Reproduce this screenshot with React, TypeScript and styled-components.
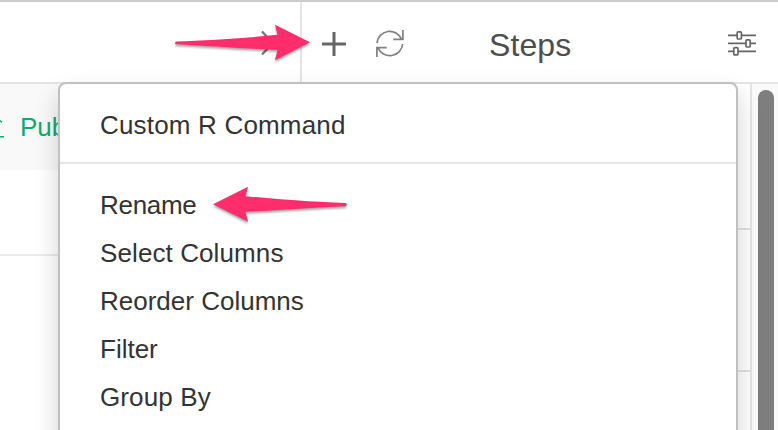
import React from "react";
import styled, { createGlobalStyle } from "styled-components";

const GlobalStyle = createGlobalStyle`
  * { box-sizing: border-box; }
  body {
    margin: 0;
    overflow: hidden;
    background: #fff;
    font-family: "Liberation Sans", Helvetica, Arial, sans-serif;
  }
`;

const Page = styled.div`
  position: relative;
  display: flex;
  flex-direction: column;
  width: 778px;
  height: 430px;
  overflow: hidden;
  background: #fff;
`;

const Header = styled.header`
  display: flex;
  height: 84px;
  flex: none;
  border-top: 2px solid #cccccc;
  border-bottom: 2px solid #e5e5e5;
`;

const TabArea = styled.div`
  display: flex;
  align-items: center;
  justify-content: flex-end;
  width: 302px;
  padding: 2px 15px 0 0;
  border-right: 2px solid #e4e4e4;
`;

const StepsBar = styled.div`
  display: grid;
  grid-template-columns: 64px 48px 1fr 50px;
  flex: 1;
`;

const IconButton = styled.span<{ $left: number; $top: number }>`
  padding: ${(p) => p.$top}px 0 0 ${(p) => p.$left}px;
  line-height: 0;
`;

const Title = styled.h1`
  margin: 0;
  padding: 24px 0 0 75px;
  font-size: 32px;
  font-weight: 400;
  line-height: 38px;
  letter-spacing: 0.1px;
  color: #4d4d4d;
`;

const Body = styled.main`
  display: flex;
  flex: 1;
  min-height: 0;
`;

const Content = styled.section`
  width: 302px;
`;

const PublishBar = styled.div`
  display: flex;
  height: 86px;
  background: #f9f9f9;
`;

const PublishLabel = styled.span`
  padding: 27px 0 0 15px;
  font-size: 26px;
  line-height: 32px;
  color: #12ab6d;
`;

const TrayIcon = styled.svg`
  width: 5px;
  height: 22px;
  margin-top: 34px;
`;

const ContentRow = styled.div`
  height: 86px;
  border-bottom: 2px solid #ebebeb;
`;

const StepList = styled.section`
  flex: 1;
  border-right: 2px solid #e4e4e4;
`;

const Step = styled.div<{ $height: number }>`
  height: ${(p) => p.$height}px;
  border-bottom: 2px solid #e2e2e2;
`;

const Track = styled.div`
  width: 26px;
  padding: 6px 4px 0 6px;
  background: #fafafa;
`;

const Thumb = styled.div`
  height: 100%;
  border-radius: 8px 8px 0 0;
  background: #7e7e7e;
`;

const Menu = styled.nav`
  position: absolute;
  top: 82px;
  left: 58px;
  width: 680px;
  height: 420px;
  border: 2px solid #c0c0c0;
  border-radius: 8px;
  background: #fff;
  background-clip: padding-box;
  box-shadow: 0 12px 24px rgba(0, 0, 0, 0.175);
`;

const MenuSection = styled.div<{ $divided?: boolean }>`
  padding: 17px 0;
  height: ${(p) => (p.$divided ? "80px" : "auto")};
  border-bottom: ${(p) => (p.$divided ? "2px solid #e5e5e5" : "0")};
`;

const MenuItem = styled.div<{ $spacing: number }>`
  height: 48px;
  padding-left: 40px;
  font-size: 26px;
  line-height: 48px;
  letter-spacing: ${(p) => p.$spacing}px;
  color: #333;
  white-space: nowrap;
`;

const Arrow = styled.svg<{ $x: number; $y: number }>`
  position: absolute;
  left: ${(p) => p.$x}px;
  top: ${(p) => p.$y}px;
  width: 150px;
  height: 50px;
  fill: #ff2d6c;
  filter: drop-shadow(0 2px 1px rgba(0, 0, 0, 0.35));
`;

const actions = [
  { label: "Rename", spacing: -0.3 },
  { label: "Select Columns", spacing: 0.1 },
  { label: "Reorder Columns", spacing: 0 },
  { label: "Filter", spacing: 0 },
  { label: "Group By", spacing: 0.12 },
];

export default function App() {
  return (
    <>
      <GlobalStyle />
      <Page>
        <Header>
          <TabArea>
            <svg width="24" height="26" stroke="#777" strokeWidth="2.4" fill="none">
              <path d="M1 1.5L22.5 24M1 24.5L22.5 2" />
            </svg>
          </TabArea>
          <StepsBar>
            <IconButton $left={20} $top={30}>
              <svg width="24" height="24" stroke="#666" strokeWidth="3" fill="none">
                <path d="M12 0V24M0 12H24" />
              </svg>
            </IconButton>
            <IconButton $left={9} $top={26}>
              <svg width="30" height="30" stroke="#808080" strokeWidth="1.7" fill="none">
                <path d="M1.9 15A12.9 12.9 0 0 1 26.6 11.2M27.9 2V11.4H18.2M27.7 16A12.9 12.9 0 0 1 3 19.8M1.9 29V19.7H11.7" />
              </svg>
            </IconButton>
            <Title>Steps</Title>
            <IconButton $left={0} $top={28}>
              <svg width="30" height="28" stroke="#666" strokeWidth="1.7" fill="none">
                <path d="M0 5.4H28M0 13.4H28M0 21.3H28" />
                <g fill="#fff" strokeWidth="1.7">
                  <rect x="9.2" y="3" width="4.2" height="7.2" rx="1" transform="translate(0 -1.2)" />
                  <rect x="18" y="9.8" width="4.2" height="7.2" rx="1" />
                  <rect x="5.8" y="17.7" width="4.2" height="7.2" rx="1" />
                </g>
              </svg>
            </IconButton>
          </StepsBar>
        </Header>
        <Body>
          <Content>
            <PublishBar>
              <TrayIcon viewBox="0 0 5 22" stroke="#12ab6d" fill="none">
                <path d="M0 2.4L2 4.4M0 18.7H4" strokeWidth="1.4" />
              </TrayIcon>
              <PublishLabel>Publish</PublishLabel>
            </PublishBar>
            <ContentRow />
          </Content>
          <StepList>
            <Step $height={146} />
            <Step $height={142} />
          </StepList>
          <Track>
            <Thumb />
          </Track>
        </Body>
        <Menu>
          <MenuSection $divided>
            <MenuItem $spacing={0.18}>Custom R Command</MenuItem>
          </MenuSection>
          <MenuSection>
            {actions.map((a) => (
              <MenuItem key={a.label} $spacing={a.spacing}>
                {a.label}
              </MenuItem>
            ))}
          </MenuSection>
        </Menu>
        <Arrow $x={170} $y={20} viewBox="170 20 150 50">
          <path d="M176 41.6C205 40.5 245 38 277.5 34.8L275 24.7L310 42.3L275 60.3L277.5 50C245 48.5 205 45.7 176 44.2Q174 43 176 41.6Z" />
        </Arrow>
        <Arrow $x={205} $y={180} viewBox="205 180 150 50">
          <path d="M345.7 203C310 202 275 199 245.5 196.2L248 186.8L213 204.3L248 221.8L245.5 211.8C280 210 315 207.5 345.7 206.2Q348 204.5 345.7 203Z" />
        </Arrow>
      </Page>
    </>
  );
}
